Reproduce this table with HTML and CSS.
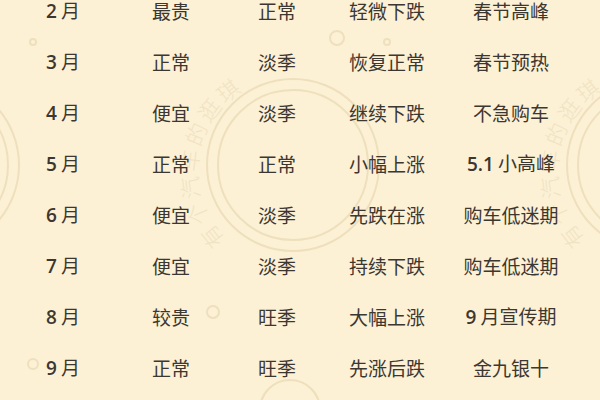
FILE: index.html
```html
<!DOCTYPE html>
<html lang="zh">
<head>
<meta charset="utf-8">
<link rel="stylesheet" href="styles.css">
</head>
<body>
<svg class="watermark" width="600" height="400" viewBox="0 0 600 400">
  <defs>
    <path id="arcM" d="M 226 240 A 80 80 0 0 1 360 104"/>
    <path id="arcR" d="M 586 240 A 80 80 0 0 1 720 104"/>
    <path id="arcL" d="M -134 240 A 80 80 0 0 1 0 104"/>
  </defs>
  <g fill="none" stroke="#eee0bd" stroke-width="2">
    <circle cx="293" cy="165" r="86"/>
    <circle cx="293" cy="165" r="75"/>
    <circle cx="653" cy="165" r="86"/>
    <circle cx="653" cy="165" r="75"/>
    <circle cx="-67" cy="165" r="86"/>
    <circle cx="-67" cy="165" r="75"/>
    <circle cx="33" cy="42" r="3"/>
    <circle cx="337" cy="38" r="7"/>
    <circle cx="387" cy="42" r="3"/>
    <circle cx="213" cy="312" r="6"/>
    <circle cx="33" cy="364" r="5"/>
    <circle cx="290" cy="410" r="30"/>
  </g>
  <g class="wm-text">
    <text><textPath href="#arcM">有个汽车的逛琪</textPath></text>
    <text><textPath href="#arcR">有个汽车的逛琪</textPath></text>
    <text><textPath href="#arcL">有个汽车的逛琪</textPath></text>
  </g>
</svg>
<div class="table">
  <div class="row"><span><b class="n">2</b> 月</span><span>最贵</span><span>正常</span><span>轻微下跌</span><span>春节高峰</span></div>
  <div class="row"><span><b class="n">3</b> 月</span><span>正常</span><span>淡季</span><span>恢复正常</span><span>春节预热</span></div>
  <div class="row"><span><b class="n">4</b> 月</span><span>便宜</span><span>淡季</span><span>继续下跌</span><span>不急购车</span></div>
  <div class="row"><span><b class="n">5</b> 月</span><span>正常</span><span>正常</span><span>小幅上涨</span><span><b class="n">5.1</b> 小高峰</span></div>
  <div class="row"><span><b class="n">6</b> 月</span><span>便宜</span><span>淡季</span><span>先跌在涨</span><span>购车低迷期</span></div>
  <div class="row"><span><b class="n">7</b> 月</span><span>便宜</span><span>淡季</span><span>持续下跌</span><span>购车低迷期</span></div>
  <div class="row"><span><b class="n">8</b> 月</span><span>较贵</span><span>旺季</span><span>大幅上涨</span><span><b class="n">9</b> 月宣传期</span></div>
  <div class="row"><span><b class="n">9</b> 月</span><span>正常</span><span>旺季</span><span>先涨后跌</span><span>金九银十</span></div>
</div>
</body>
</html>
```
FILE: styles.css
```css
html, body {
  margin: 0;
  padding: 0;
}
body {
  width: 600px;
  height: 400px;
  overflow: hidden;
  background: #fcf1d5;
  position: relative;
  font-family: "Noto Sans CJK SC", "Noto Sans", sans-serif;
  color: #3d3731;
}
.watermark {
  position: absolute;
  left: 0;
  top: 0;
  z-index: 0;
  pointer-events: none;
}
.wm-text {
  fill: #f0e3c3;
  font-family: "Noto Sans CJK SC", sans-serif;
  font-size: 22px;
  font-weight: 300;
  letter-spacing: 3px;
}
.table {
  position: relative;
  z-index: 1;
  margin-top: -16px;
  padding-left: 12px;
}
.row {
  display: grid;
  grid-template-columns: 102px 114px 98px 122px 126px;
  height: 51px;
  align-items: center;
  font-size: 19px;
  line-height: 51px;
}
.row span {
  text-align: center;
  white-space: nowrap;
}
.n {
  font-family: "Open Sans", sans-serif;
  font-weight: 600;
}
```
